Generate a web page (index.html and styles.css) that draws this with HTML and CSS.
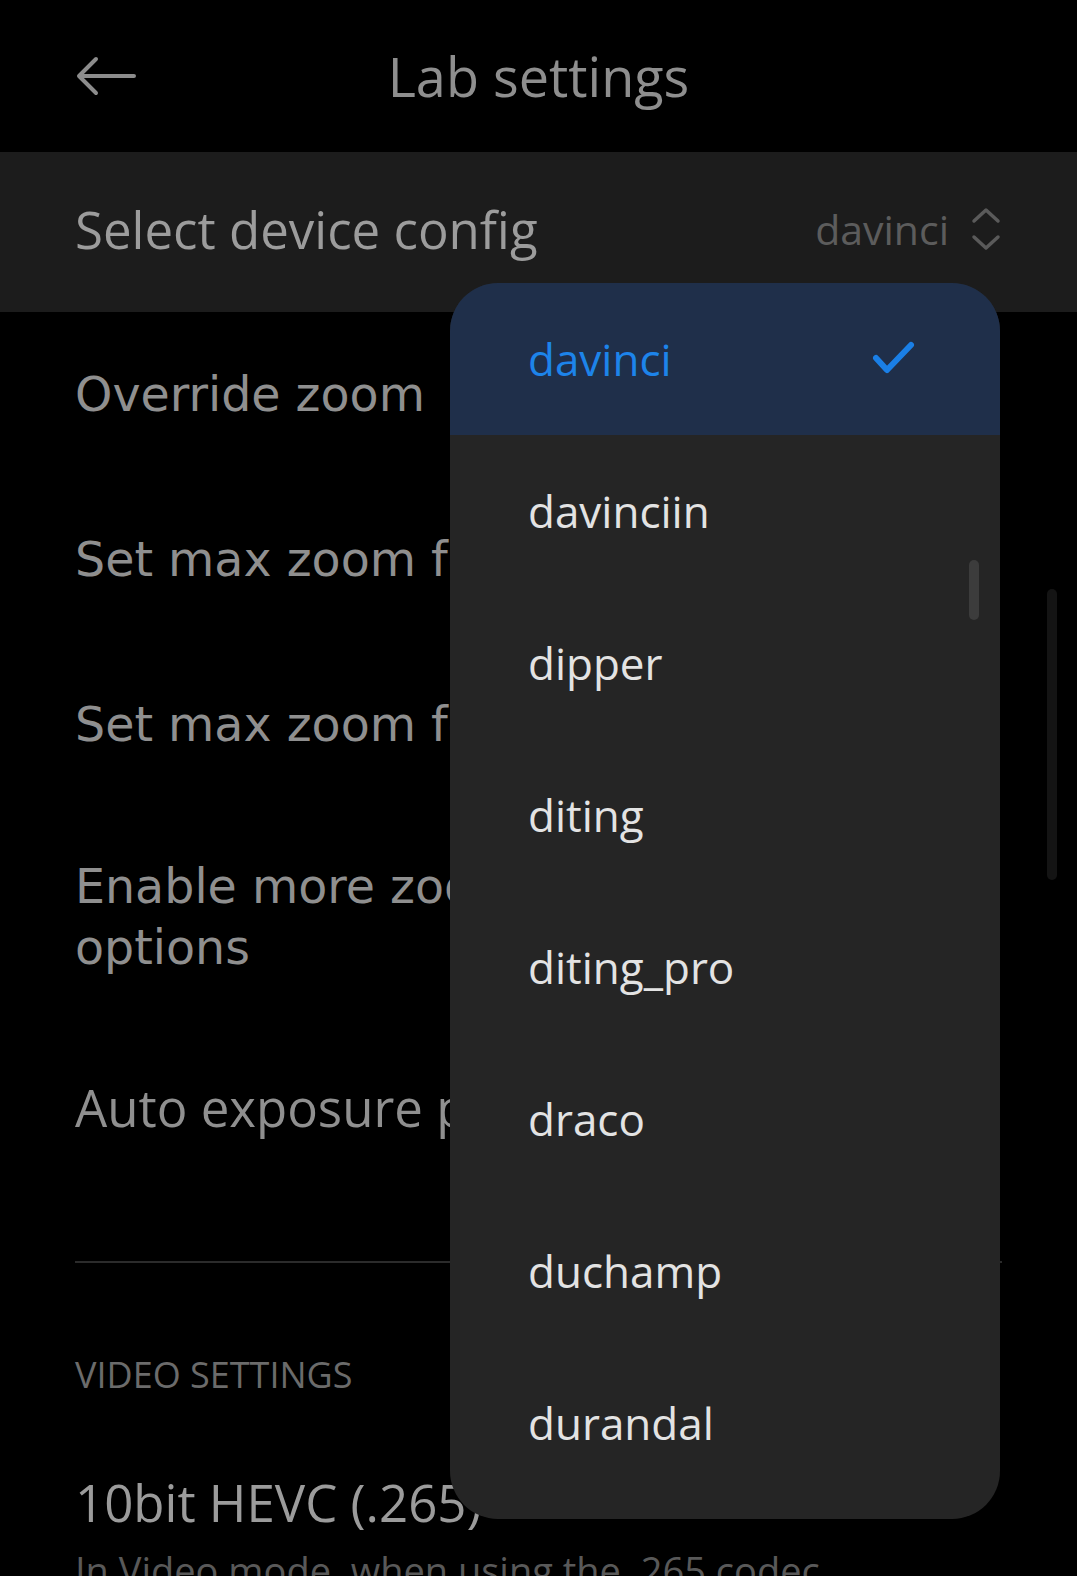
FILE: index.html
```html
<!DOCTYPE html>
<html lang="en">
<head>
  <meta charset="UTF-8" />
  <meta name="viewport" content="width=device-width, initial-scale=1.0"/>
  <title>Lab settings</title>
  <link rel="stylesheet" href="styles.css">
</head>
<body>

<div class="screen">
  <!-- Top bar -->
  <div class="topbar">
    <div class="back">
      <svg width="60" height="40" viewBox="0 0 60 40">
        <path d="M58 20 H4 M20 3 L3 20 L20 37" fill="none" stroke="#8c8c8c" stroke-width="4" stroke-linecap="round" stroke-linejoin="round"/>
      </svg>
    </div>
    <div class="title">Lab settings</div>
    <div></div>
  </div>

  <!-- Device config picker -->
  <div class="select-row">
    <div class="select-label">Select device config</div>
    <div class="select-value">
      <span>davinci</span>
      <svg width="30" height="44" viewBox="0 0 30 44">
        <path d="M3 14 L15 3 L27 14 M3 30 L15 41 L27 30" fill="none" stroke="#5a5a5a" stroke-width="3.5" stroke-linecap="round" stroke-linejoin="round"/>
      </svg>
    </div>
  </div>

  <div class="rows">
    <div class="row wide">Override zoom</div>
    <div class="row wide">Set max zoom for photo</div>
    <div class="row wide">Set max zoom for video</div>
    <div class="row wide two-line">Enable more zoom<br>options</div>
    <div class="row last">Auto exposure priority</div>
  </div>

  <div class="divider"></div>

  <div class="category">VIDEO SETTINGS</div>
  <div class="pref-title">10bit HEVC (.265)</div>
  <div class="pref-summary">In Video mode, when using the .265 codec, record in 10bit</div>

  <!-- page scrollbar -->
  <div class="page-scroll"></div>

  <!-- Dropdown menu -->
  <div class="popup">
    <div class="option selected">
      <span>davinci</span>
      <svg width="44" height="36" viewBox="0 0 44 36">
        <path d="M4 17 L15 29 L39 4" fill="none" stroke="#1a7fe6" stroke-width="6" stroke-linecap="round" stroke-linejoin="round"/>
      </svg>
    </div>
    <div class="option">davinciin</div>
    <div class="option">dipper</div>
    <div class="option">diting</div>
    <div class="option">diting_pro</div>
    <div class="option">draco</div>
    <div class="option">duchamp</div>
    <div class="option">durandal</div>
    <div class="option">elish</div>
    <div class="popup-scroll"></div>
  </div>
</div>

</body>
</html>
```

FILE: styles.css
```css
body {
  margin: 0;
  background-color: #000;
  font-family: "Open Sans", "Noto Sans", sans-serif;
}

.screen {
  position: relative;
  height: 1576px;
  overflow: hidden;
}

.topbar {
  height: 152px;
  display: grid;
  grid-template-columns: 1fr auto 1fr;
  align-items: center;
}

.back {
  padding-left: 76px;
  display: flex;
  align-items: center;
}

.title {
  font-size: 54px;
  color: #8e8e8e;
}

.select-row {
  height: 160px;
  background-color: #1c1c1c;
  display: flex;
  align-items: center;
  justify-content: space-between;
  padding: 0 76px 0 75px;
}

.select-label {
  font-size: 51px;
  color: #9c9c9c;
  margin-top: -6px;
}

.select-value {
  display: flex;
  align-items: center;
  gap: 22px;
  font-size: 41px;
  color: #5c5c5c;
  margin-top: -6px;
}

.row {
  padding: 52px 75px;
  font-size: 51px;
  line-height: 61px;
  color: #8f8f8f;
  white-space: nowrap;
}

.row.wide {
  font-family: "DejaVu Sans", sans-serif;
  font-size: 47.5px;
}

.row.two-line {
  padding-top: 49px;
}

.row.last {
  padding-top: 47px;
}

.divider {
  height: 2px;
  background-color: #2b2b2b;
  margin: 71px 75px 0;
}

.category {
  margin: 88px 75px 0;
  font-size: 36px;
  line-height: 48px;
  color: #6b6b6b;
}

.pref-title {
  margin: 73px 75px 0;
  font-size: 51px;
  line-height: 61px;
  color: #9b9b9b;
}

.pref-summary {
  margin: 11px 75px 0;
  max-width: 780px;
  font-size: 38px;
  line-height: 52px;
  color: #595959;
}

.page-scroll {
  position: absolute;
  left: 1047px;
  top: 589px;
  width: 10px;
  height: 291px;
  border-radius: 5px;
  background-color: #141414;
}

.popup {
  position: absolute;
  left: 450px;
  top: 283px;
  width: 550px;
  height: 1236px;
  border-radius: 48px;
  background-color: #252525;
  overflow: hidden;
}

.option {
  height: 152px;
  display: flex;
  align-items: center;
  justify-content: space-between;
  padding: 0 84px 0 78px;
  font-size: 44px;
  color: #e3e3e3;
}

.option.selected {
  background-color: #1f2f4a;
  color: #1d84ea;
}

.popup-scroll {
  position: absolute;
  left: 519px;
  top: 277px;
  width: 10px;
  height: 60px;
  border-radius: 5px;
  background-color: #3c3c3c;
}
```
